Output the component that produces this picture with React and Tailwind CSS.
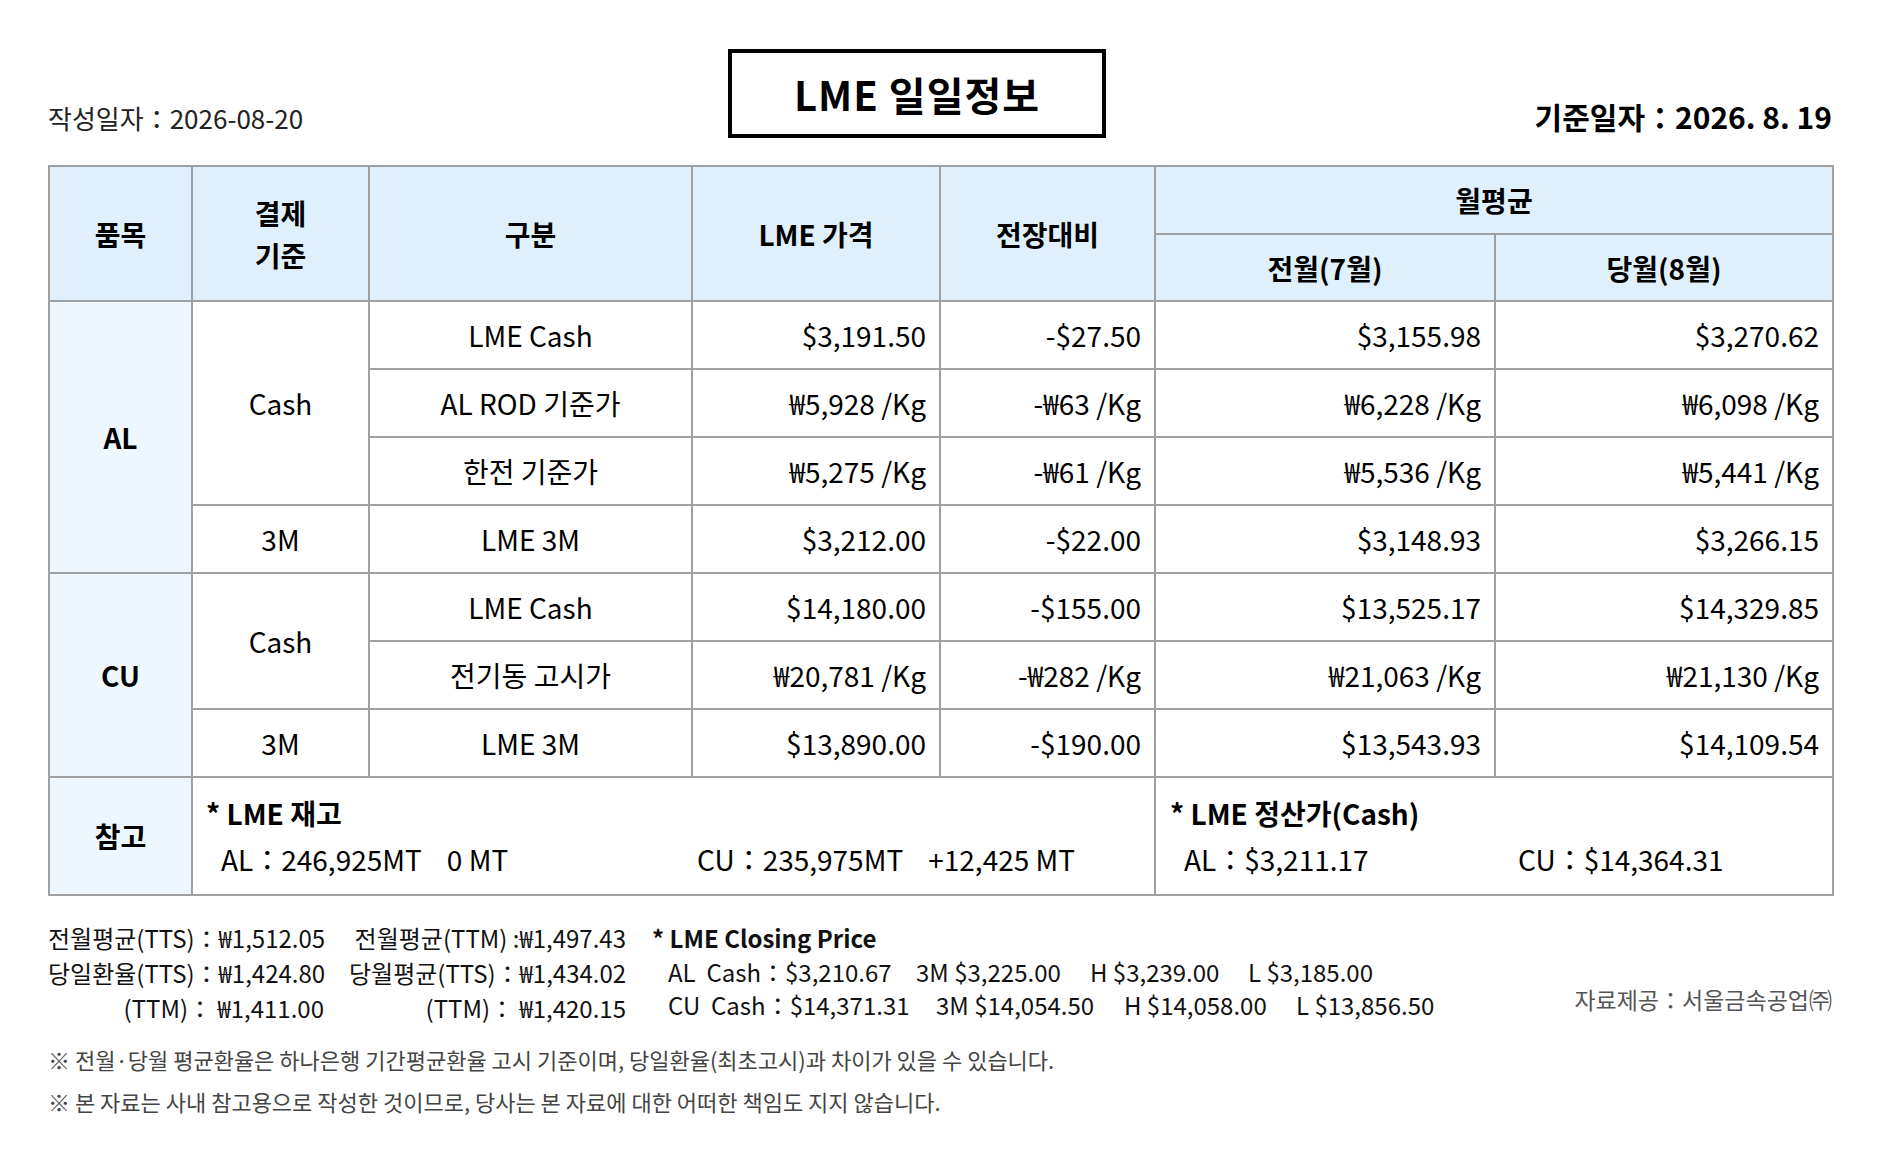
import React from "react";

const FONT = { fontFamily: '"Noto Sans CJK KR", "Noto Sans", sans-serif' };

const cell = "border-2 border-[#a0a0a0]";
const head = `${cell} bg-[#dff0fc] font-bold text-center`;
const side = `${cell} bg-[#eff7fe] font-bold text-center`;
const mid = `${cell} text-center`;
const num = `${cell} text-right pr-[13px]`;

const rows = {
  al: [
    ["LME Cash", "$3,191.50", "-$27.50", "$3,155.98", "$3,270.62"],
    ["AL ROD 기준가", "₩5,928 /Kg", "-₩63 /Kg", "₩6,228 /Kg", "₩6,098 /Kg"],
    ["한전 기준가", "₩5,275 /Kg", "-₩61 /Kg", "₩5,536 /Kg", "₩5,441 /Kg"],
    ["LME 3M", "$3,212.00", "-$22.00", "$3,148.93", "$3,266.15"],
  ],
  cu: [
    ["LME Cash", "$14,180.00", "-$155.00", "$13,525.17", "$14,329.85"],
    ["전기동 고시가", "₩20,781 /Kg", "-₩282 /Kg", "₩21,063 /Kg", "₩21,130 /Kg"],
    ["LME 3M", "$13,890.00", "-$190.00", "$13,543.93", "$14,109.54"],
  ],
};

function Values({ r }) {
  return (
    <>
      <td className={mid}>{r[0]}</td>
      <td className={num}>{r[1]}</td>
      <td className={num}>{r[2]}</td>
      <td className={num}>{r[3]}</td>
      <td className={num}>{r[4]}</td>
    </>
  );
}

function MetalRows({ name, data }) {
  const cashCount = data.length - 1;
  return (
    <>
      {data.map((r, i) => (
        <tr key={i} className="h-[68px]">
          {i === 0 && <td rowSpan={data.length} className={side}>{name}</td>}
          {i === 0 && <td rowSpan={cashCount} className={mid}>Cash</td>}
          {i === cashCount && <td className={mid}>3M</td>}
          <Values r={r} />
        </tr>
      ))}
    </>
  );
}

export default function App() {
  return (
    <div style={FONT} className="w-[1880px] h-[1164px] bg-white text-black px-[48px] pt-[49px]">
      <div className="flex items-end h-[89px]">
        <div className="w-[680px] text-[26px] leading-none pb-[7px] text-[#222]">작성일자：2026-08-20</div>
        <div className="w-[378px] h-[89px] border-4 border-black flex items-center justify-center text-[40px] font-bold tracking-[1px]">
          LME 일일정보
        </div>
        <div className="flex-1 text-right text-[30px] font-bold leading-none pb-[7px]">기준일자：2026. 8. 19</div>
      </div>

      <table className="mt-[27px] w-[1784px] table-fixed border-collapse text-[28px] leading-none">
        <colgroup>
          <col className="w-[143px]" />
          <col className="w-[177px]" />
          <col className="w-[323px]" />
          <col className="w-[248px]" />
          <col className="w-[215px]" />
          <col className="w-[340px]" />
          <col className="w-[338px]" />
        </colgroup>
        <thead className="text-[28px]">
          <tr className="h-[68px]">
            <th rowSpan={2} className={head}>품목</th>
            <th rowSpan={2} className={`${head} leading-[42px]`}>결제<br />기준</th>
            <th rowSpan={2} className={head}>구분</th>
            <th rowSpan={2} className={head}>LME 가격</th>
            <th rowSpan={2} className={head}>전장대비</th>
            <th colSpan={2} className={head}>월평균</th>
          </tr>
          <tr className="h-[67px]">
            <th className={head}>전월(7월)</th>
            <th className={head}>당월(8월)</th>
          </tr>
        </thead>
        <tbody>
          <MetalRows name="AL" data={rows.al} />
          <MetalRows name="CU" data={rows.cu} />
          <tr className="h-[118px]">
            <td className={`${side} text-[28px]`}>참고</td>
            <td colSpan={4} className={`${cell} pl-[13px] align-middle`}>
              <div className="font-bold text-[28px] leading-[46px]">* LME 재고</div>
              <div className="flex leading-[46px] text-[28px] pl-[15px] whitespace-pre">
                <span className="w-[476px]">AL：246,925MT    0 MT</span>
                <span>CU：235,975MT    +12,425 MT</span>
              </div>
            </td>
            <td colSpan={2} className={`${cell} pl-[14px] align-middle`}>
              <div className="font-bold text-[28px] leading-[46px]">* LME 정산가(Cash)</div>
              <div className="flex leading-[46px] text-[28px] pl-[14px]">
                <span className="w-[334px]">AL：$3,211.17</span>
                <span>CU：$14,364.31</span>
              </div>
            </td>
          </tr>
        </tbody>
      </table>

      <div className="flex mt-[24px] text-[24px] leading-[35px] text-[#111]">
        <div className="w-[276px] text-right whitespace-pre">
          <div>전월평균(TTS)：₩1,512.05</div>
          <div>당일환율(TTS)：₩1,424.80</div>
          <div>(TTM)： ₩1,411.00</div>
        </div>
        <div className="w-[277px] ml-[25px] text-right whitespace-pre">
          <div>전월평균(TTM) :₩1,497.43</div>
          <div>당월평균(TTS)：₩1,434.02</div>
          <div>(TTM)： ₩1,420.15</div>
        </div>
        <div className="ml-[26px] whitespace-pre leading-[33px]">
          <div className="font-bold text-[24px] leading-[35px]">* LME Closing Price</div>
          <div className="pl-[16px] flex">
            <span className="w-[248px]">AL  Cash：$3,210.67</span>
            <span className="w-[174px]">3M $3,225.00</span>
            <span className="w-[158px]">H $3,239.00</span>
            <span>L $3,185.00</span>
          </div>
          <div className="pl-[16px] flex">
            <span className="w-[268px]">CU  Cash：$14,371.31</span>
            <span className="w-[188px]">3M $14,054.50</span>
            <span className="w-[172px]">H $14,058.00</span>
            <span>L $13,856.50</span>
          </div>
        </div>
        <div className="flex-1 self-end text-right text-[#555] text-[23px] pb-[8px]">자료제공：서울금속공업㈜</div>
      </div>

      <div className="mt-[13px] text-[22px] leading-[42px] text-[#444]">
        <div>※ 전월·당월 평균환율은 하나은행 기간평균환율 고시 기준이며, 당일환율(최초고시)과 차이가 있을 수 있습니다.</div>
        <div>※ 본 자료는 사내 참고용으로 작성한 것이므로, 당사는 본 자료에 대한 어떠한 책임도 지지 않습니다.</div>
      </div>
    </div>
  );
}
